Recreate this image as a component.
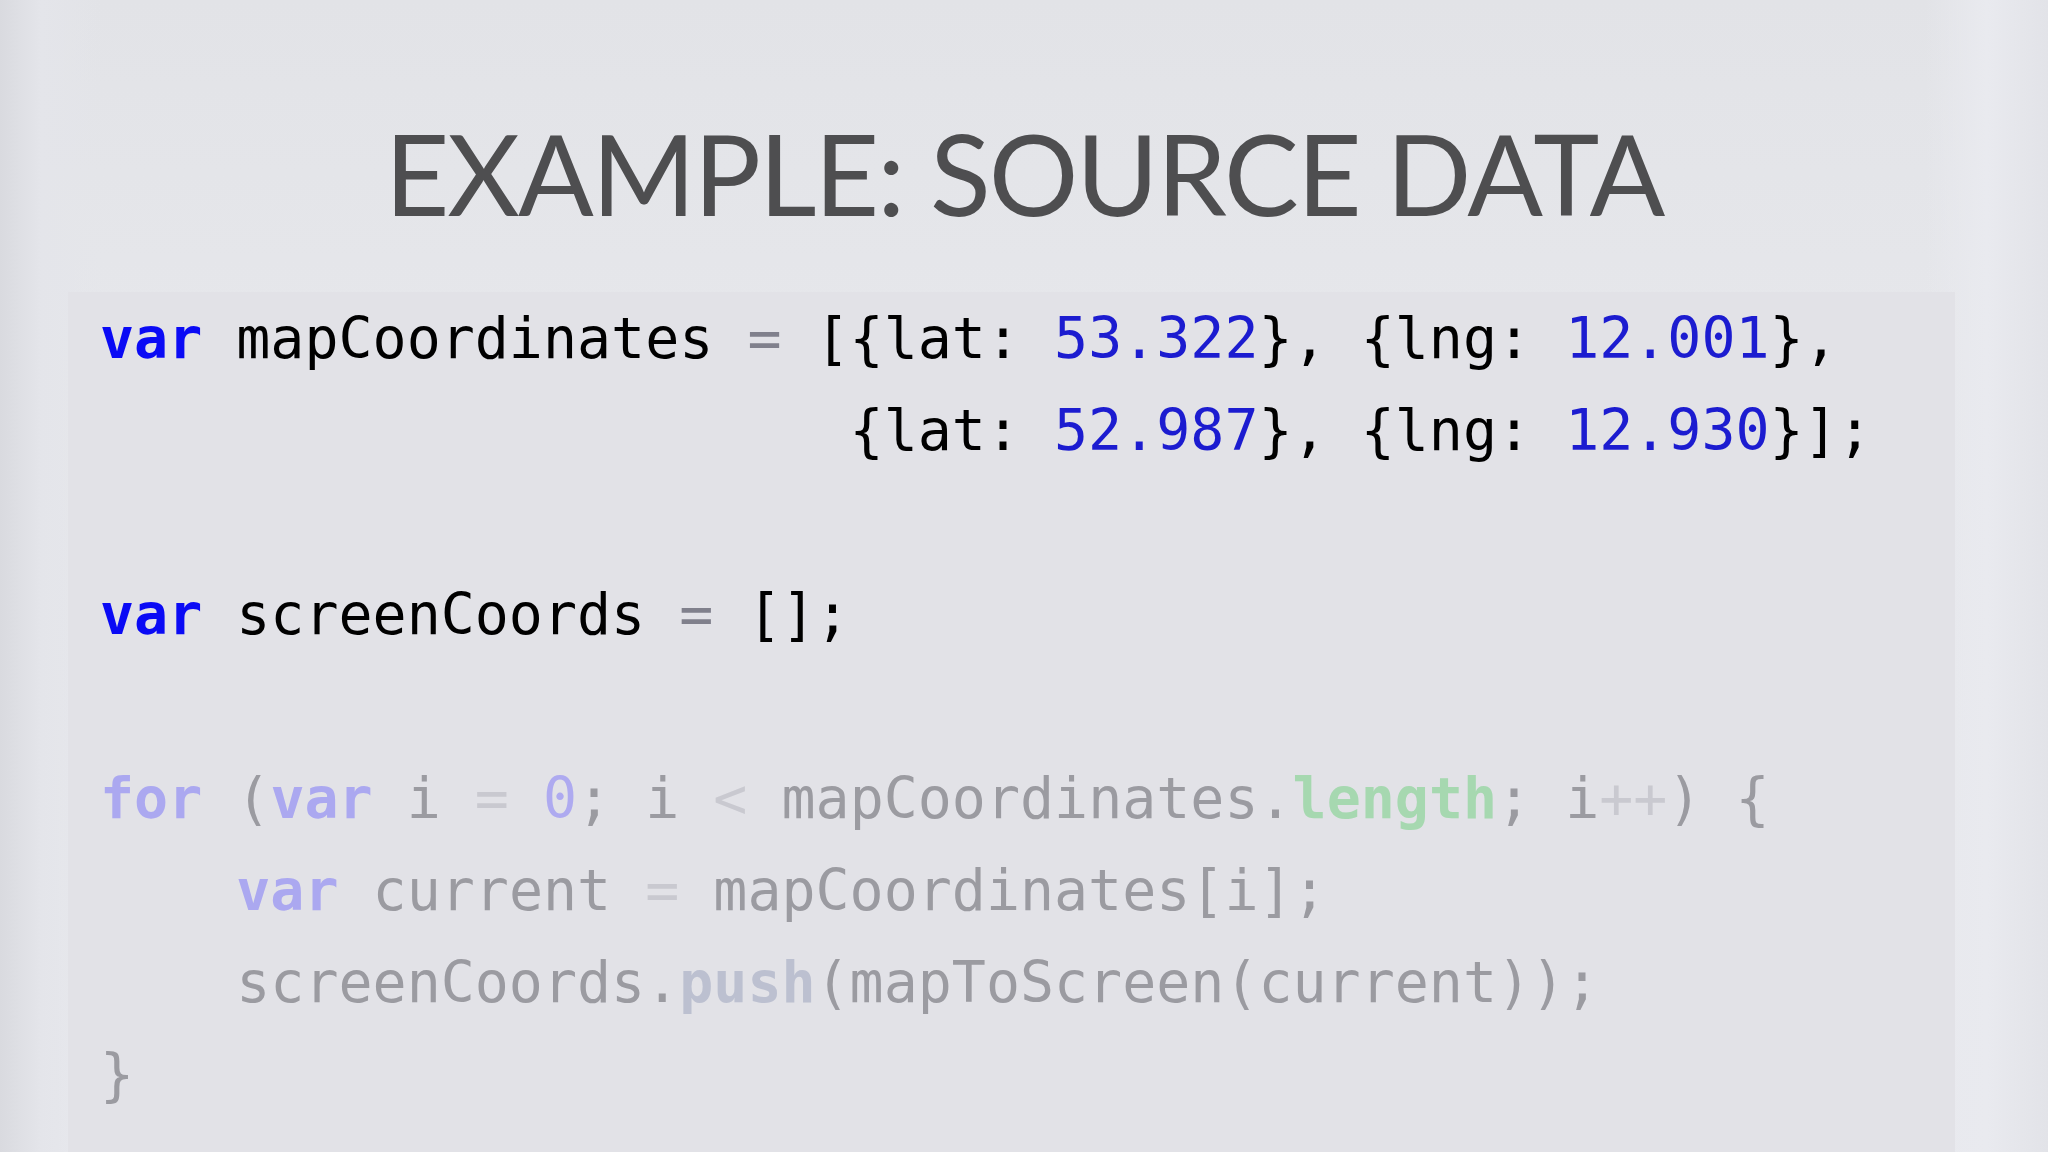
type Tok = [string, string];

const K = "text-[#0a0af5] font-bold";
const N = "text-[#1c1cd0]";
const T = "text-black";
const Q = "text-[#80808c]";

const FK = "text-[#aba8f0] font-bold";
const FT = "text-[#9b9ba1]";
const FQ = "text-[#c9c9d0]";
const FN = "text-[#aeaaf0]";
const FG = "text-[#a6d8b0] font-bold";
const FP = "text-[#bcc0d0] font-bold";

const lines: Tok[][] = [
  [[K, "var"], [T, " mapCoordinates "], [Q, "="], [T, " [{lat: "], [N, "53.322"], [T, "}, {lng: "], [N, "12.001"], [T, "},"]],
  [[T, "                      {lat: "], [N, "52.987"], [T, "}, {lng: "], [N, "12.930"], [T, "}];"]],
  [],
  [[K, "var"], [T, " screenCoords "], [Q, "="], [T, " [];"]],
  [],
  [[FK, "for"], [FT, " ("], [FK, "var"], [FT, " i "], [FQ, "="], [FT, " "], [FN, "0"], [FT, "; i "], [FQ, "<"], [FT, " mapCoordinates."], [FG, "length"], [FT, "; i"], [FQ, "++"], [FT, ") {"]],
  [[FT, "    "], [FK, "var"], [FT, " current "], [FQ, "="], [FT, " mapCoordinates[i];"]],
  [[FT, "    screenCoords."], [FP, "push"], [FT, "(mapToScreen(current));"]],
  [[FT, "}"]],
];

export default function App() {
  return (
    <div className="h-[1152px] w-full overflow-hidden bg-[linear-gradient(180deg,#e2e3e7_0%,#e6e7eb_30%,#e8e9ee_100%)]">
      <div className="h-full w-full bg-[linear-gradient(90deg,#d9dadf_0%,#e4e5ea_2%,transparent_5%,transparent_94%,#e9eaef_97%,#e2e3e8_100%)]">
        <div className="h-[292px] pt-[117px] text-center">
          <h1 className="text-[112px] leading-none text-[#4e4e50] tracking-[-2px] font-['Lato','Noto_Sans',sans-serif]">
            EXAMPLE: SOURCE DATA
          </h1>
        </div>
        <div className="ml-[68px] w-[1887px] h-[860px] bg-[#e2e2e7] pl-[32px] font-['DejaVu_Sans_Mono','Liberation_Mono',monospace] text-[56.6px] leading-[92px] whitespace-pre">
          {lines.map((l, i) => (
            <div key={i} className="h-[92px]">
              {l.map(([c, s], j) => (
                <span key={j} className={c}>{s}</span>
              ))}
            </div>
          ))}
        </div>
      </div>
    </div>
  );
}
